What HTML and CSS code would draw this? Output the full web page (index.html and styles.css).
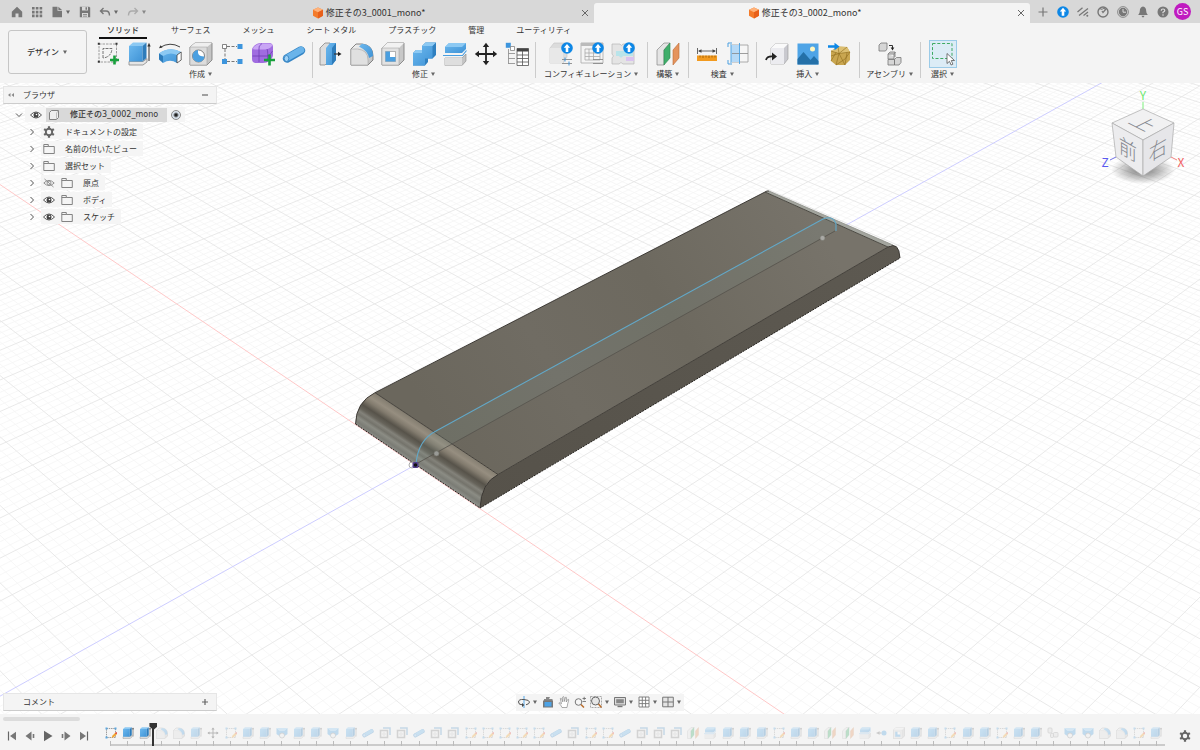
FILE: index.html
```html
<!DOCTYPE html>
<html lang="ja">
<head>
    <meta charset="UTF-8">
    <meta name="viewport" content="width=device-width, initial-scale=1.0">
    <title>修正その3_0002_mono</title>
    <link rel="stylesheet" href="styles.css">
</head>
<body>
    <!-- アイコン定義 -->
    <svg class="sprite" aria-hidden="true">
        <defs>
            <linearGradient id="blue" x1="0" y1="0" x2="1" y2="1"><stop offset="0" stop-color="#6cb8ee"/><stop offset="1" stop-color="#3f93d6"/></linearGradient>
            <linearGradient id="grey" x1="0" y1="0" x2="1" y2="1"><stop offset="0" stop-color="#f4f4f4"/><stop offset="1" stop-color="#bdbdbd"/></linearGradient>
        </defs>
        <symbol id="i-caret" viewBox="0 0 6 6"><path d="M1 1.5h4L3 5z" fill="#666"/></symbol>
        <symbol id="i-doc" viewBox="0 0 12 12"><path d="M6 .5l5 2.3v6L6 11.500 1 8.800v-6z" fill="#f47b2a"/><path d="M6 .5l5 2.300-5 2.400-5-2.400z" fill="#ffb27a"/><path d="M6 5.200l5-2.400v6L6 11.500z" fill="#e8601a"/></symbol>
        <symbol id="i-home" viewBox="0 0 12 12"><path d="M6 .8L.8 5.800V11.300h3.700V7.500h3v3.800h3.700V5.800z" fill="#777"/></symbol>
        <symbol id="i-apps" viewBox="0 0 12 12"><path d="M1 1h2.600v2.600H1zM4.800 1h2.600v2.600H4.800zM8.600 1h2.600v2.600H8.600zM1 4.800h2.600v2.600H1zM4.800 4.800h2.600v2.600H4.800zM8.600 4.800h2.600v2.600H8.600zM1 8.600h2.600v2.600H1zM4.800 8.600h2.600v2.600H4.800zM8.600 8.600h2.600v2.600H8.600z" fill="#777"/></symbol>
        <symbol id="i-file" viewBox="0 0 12 12"><path d="M1.500 .8h5v4h4.500v6.500H1.500z" fill="#777"/><path d="M7.400 .8L11 4H7.400z" fill="#777"/></symbol>
        <symbol id="i-save" viewBox="0 0 12 12"><path d="M.8.800h9.400l1 1v9.400H.8z" fill="#777"/><path d="M3 .8h6v3.700H3zM3 7h6v4.200H3z" fill="#d8d8d8"/><path d="M6.500 1.200h1.500v2.500H6.500zM4 8.200h4v.8H4zM4 9.700h4v.8H4z" fill="#777"/></symbol>
        <symbol id="i-undo" viewBox="0 0 12 12"><path d="M4.500 2L1.500 5l3 3M1.800 5H7q3.500 0 3.500 4.500" fill="none" stroke="#777" stroke-width="1.400"/></symbol>
        <symbol id="i-redo" viewBox="0 0 12 12"><path d="M7.500 2l3 3-3 3M10.200 5H5Q1.500 5 1.500 9.500" fill="none" stroke="#999" stroke-width="1.400"/></symbol>
        <symbol id="i-close" viewBox="0 0 12 12"><path d="M3 3l6 6M9 3L3 9" stroke="#666" fill="none"/></symbol>
        <symbol id="i-plus" viewBox="0 0 12 12"><path d="M6 1.500v9M1.500 6h9" stroke="#777" stroke-width="1.200"/></symbol>
        <symbol id="i-up" viewBox="0 0 12 12"><circle cx="6" cy="6" r="5.800" fill="#0d87e6"/><path d="M6 1.800L9.200 5.600H7.300V9.800H4.700V5.600H2.800z" fill="#fff"/></symbol>
        <symbol id="i-ext" viewBox="0 0 12 12"><path d="M.5 6L5.500 1.800M2 9.500L11 2.500M6.500 9.500l4.500-3.500" stroke="#777" stroke-width="1.300"/><circle cx="10.300" cy="9.800" r="1" fill="#777"/></symbol>
        <symbol id="i-globe" viewBox="0 0 12 12"><circle cx="6" cy="6" r="5" fill="none" stroke="#777" stroke-width="1.400"/><path d="M2.500 2.500l3 1M9 3L6 6.500l-1-1.500M8.500 3l-3-1" fill="none" stroke="#777" stroke-width="1.300"/></symbol>
        <symbol id="i-clock" viewBox="0 0 12 12"><circle cx="6" cy="6" r="5.400" fill="none" stroke="#777" stroke-width=".8"/><circle cx="6" cy="6" r="4.200" fill="#777"/><path d="M6 3v3.200h3" fill="none" stroke="#ddd"/></symbol>
        <symbol id="i-bell" viewBox="0 0 12 12"><path d="M6 .5q3.200.5 3.200 4.500 0 2.500 1.600 4H1.200Q2.800 7.500 2.800 5 2.800 1 6 .5zM4.500 9.800h3Q7 11.500 6 11.500T4.500 9.800z" fill="#777"/></symbol>
        <symbol id="i-help" viewBox="0 0 12 12"><circle cx="6" cy="6" r="5.500" fill="#777"/><path d="M4.200 4.800Q4.300 3 6 3t1.800 1.600Q7.800 5.600 6 6.300V7.300" fill="none" stroke="#ddd" stroke-width="1.200"/><circle cx="6" cy="9" r=".8" fill="#ddd"/></symbol>

        <symbol id="i-newsketch" viewBox="0 0 24 24"><path d="M3 2h17.500v18H3z" fill="none" stroke="#888" stroke-width=".8" stroke-dasharray="2.500 1"/><path d="M1.800 .8h2v2h-2zM19.500 .8h2v2h-2zM1.800 18.800h2v2h-2z" fill="#333"/><path d="M7 16V6.500h9Q15.500 15 7 16z" fill="none" stroke="#666" stroke-width=".9" stroke-dasharray="3 1"/><path d="M18.500 13.500v9M14 18h9" stroke="#18a03c" stroke-width="2.600"/></symbol>
        <symbol id="i-extrude" viewBox="0 0 24 24"><path d="M2 19.500h14l4-3v3.500l-4 3H2z" fill="#e5e5e5" stroke="#888" stroke-width=".8"/><path d="M2 4l4-3.500h13.500L15.500 4z" fill="#8cc9f3"/><path d="M2 4h13.500v15.500H2z" fill="url(#blue)"/><path d="M15.500 4l4-3.500V16l-4 3.500z" fill="#2d7cbb"/><path d="M22 19V3" stroke="#333"/><path d="M20.300 4.500L22 .8l1.700 3.700z" fill="#333"/></symbol>
        <symbol id="i-revolve" viewBox="0 0 24 24"><path d="M2 5.500Q12-.8 22 5" fill="none" stroke="#444"/><path d="M1 6.200l1.500-3 2 2.400z" fill="#333"/><path d="M1 11.500Q12 4 23 10v1.500l-4 9.500Q12 16.500 5 21z" fill="url(#blue)"/><path d="M1 11.500Q12 4 23 10l-4 3Q12 9.500 5 14z" fill="#8cc9f3"/><path d="M1 11.500L5 14v7l-4-3.500z" fill="#2d7cbb"/><path d="M19 13l4.200-3v8L19 21z" fill="#fff" stroke="#444" stroke-width=".8"/></symbol>
        <symbol id="i-hole" viewBox="0 0 24 24"><path d="M1 5l5-4h17v17l-5 5H1z" fill="#c5c5c5" stroke="#777" stroke-width=".8"/><path d="M1 5l5-4h17l-5 4z" fill="#efefef"/><path d="M1 5h17v18H1z" fill="#dcdcdc" stroke="#999" stroke-width=".5"/><circle cx="9.500" cy="14" r="6" fill="#fff" stroke="#666" stroke-width=".8"/><path d="M9 8Q8 15 15.500 14.500A6 6 0 1 1 9 8z" fill="#4a9fe0"/></symbol>
        <symbol id="i-pattern" viewBox="0 0 24 24"><path d="M7 4.500h10M5 7v10M7 19.500h10" stroke="#777" stroke-dasharray="3 1.500"/><path d="M2.500 2.500h4v4h-4z" fill="#fff" stroke="#666" stroke-width=".8"/><path d="M17.500 2h5v5h-5zM2 17h5v5H2zM17.500 17h5v5h-5z" fill="#3d95dd"/></symbol>
        <symbol id="i-form" viewBox="0 0 24 24"><path d="M1 8q0-3 4-5.500Q7 .5 11 1h7q4 0 4 4v8q0 3-4 6-2 2-6 2H5q-4 0-4-4z" fill="#a06ce0"/><path d="M2 6q3-4 8-4.500h8q3 0 3.500 2Q18 7.500 14 7.500H4Q2 7.500 2 6z" fill="#c9a6f5"/><path d="M8 7v13M1.500 14H16q3 0 5.500-5M16 7q1.500 3 0 13M11 1.500Q7 4 8 7" fill="none" stroke="#6f3cb5" stroke-width=".8"/><path d="M18.500 12.500v11M13 18h11" stroke="#18a03c" stroke-width="2.600"/></symbol>
        <symbol id="i-pipe" viewBox="0 0 24 24"><path d="M5 16.500L19 8.500" stroke="#3585c5" stroke-width="8.500" stroke-linecap="round"/><path d="M5 16L19 8" stroke="#6ab4ea" stroke-width="6.500" stroke-linecap="round"/><ellipse cx="4.500" cy="16.500" rx="2.300" ry="3" fill="#9fd2f7" stroke="#2d7cbb" stroke-width=".8"/></symbol>
        <symbol id="i-press" viewBox="0 0 24 24"><path d="M1 6l5-5h5v17l-5 5H1z" fill="#ddd" stroke="#888" stroke-width=".8"/><path d="M7 6l4-5h6v17l-4 5H7z" fill="url(#blue)"/><path d="M13 6l4-5v17l-4 5z" fill="#2d7cbb"/><path d="M15 12h5" stroke="#333" stroke-width="1.200"/><path d="M19 9.800l3.500 2.200-3.500 2.200z" fill="#222"/></symbol>
        <symbol id="i-fillet" viewBox="0 0 24 24"><path d="M1 7l5-5h6q11 1 11 12v4l-5 5H1z" fill="url(#grey)" stroke="#777" stroke-width=".9"/><path d="M1 23V7h6.500Q18 8 18 18v5z" fill="#e0e0e0" stroke="#999" stroke-width=".5"/><path d="M12 1.800Q23 3 23 14l-4 2Q18 9 9 4.500z" fill="url(#blue)"/></symbol>
        <symbol id="i-shell" viewBox="0 0 24 24"><path d="M1 6l5-5h17v17l-5 5H1z" fill="#c8c8c8" stroke="#777" stroke-width=".8"/><path d="M1 6l5-5h17l-5 5z" fill="#f2f2f2"/><path d="M1 6h17v17H1z" fill="#e2e2e2" stroke="#999" stroke-width=".5"/><path d="M4.500 9.500h10v10h-10z" fill="#fff" stroke="#888" stroke-width=".6"/><path d="M4.500 9.500H9V15h5.500v4.500h-10z" fill="#4a9fe0"/></symbol>
        <symbol id="i-combine" viewBox="0 0 24 24"><path d="M1 11l3-3h6V4l3.500-3.500H24V13l-3.500 3.500H16V20l-3 3.500H1z" fill="#2f80c0"/><path d="M1 11h9V4h10.500v12.500H13v7H1z" fill="url(#blue)"/><path d="M10 4L13.500.5H24L20.500 4zM1 11l3-3h6v3z" fill="#8cc9f3"/></symbol>
        <symbol id="i-split" viewBox="0 0 24 24"><path d="M2 5l4-4h17v6l-4 4H2z" fill="url(#blue)"/><path d="M2 5l4-4h17l-4 4z" fill="#8cc9f3"/><path d="M0 13.500h19.500l4-5" fill="none" stroke="#4a9fe0" stroke-width="1.200"/><path d="M2 16h17l4-4v7l-4 4.500H2z" fill="#c4c4c4" stroke="#888" stroke-width=".6"/><path d="M2 16h17v7.500H2z" fill="#dedede"/></symbol>
        <symbol id="i-move" viewBox="0 0 24 24"><path d="M12 3v18M3 12h18" stroke="#222" stroke-width="1.800"/><path d="M8.800 5L12 .8 15.200 5zM8.800 19l3.200 4.200 3.200-4.200zM5 8.800L.8 12 5 15.200zM19 8.800l4.200 3.200L19 15.200z" fill="#222"/></symbol>
        <symbol id="i-params" viewBox="0 0 24 24"><path d="M.8 .8h5v5h-5z" fill="#3d95dd"/><path d="M5.500 4.500h4v4h-4z" fill="#fff" stroke="#777" stroke-width=".7"/><path d="M3.500 7v15M3.500 11.500H10M3.500 16.500H10M3.500 21.500H10" fill="none" stroke="#888" stroke-width=".8"/><path d="M12 6.500h11.500v17H12z" fill="#fff" stroke="#555" stroke-width=".8"/><path d="M12 6.500h11.500V9.500H12z" fill="#444"/><path d="M12 13h11.500M12 16.500h11.500M12 20h11.500M17.500 9v14.500" stroke="#555" stroke-width=".8"/></symbol>
        <symbol id="i-cfg" viewBox="0 0 24 24"><path d="M1 6l4-5h13v14l-4 6H1z" fill="#dcdcdc" stroke="#c4c4c4" stroke-width=".6"/><path d="M1 6h13v15H1z" fill="#e8e8e8"/><path d="M13 17.500h10M13 21.500h10" stroke="#8a8a8a" stroke-width=".9"/><path d="M16 15.500v4M20 19.500v4" stroke="#3d95dd"/><circle cx="18" cy="6" r="5.800" fill="#0d87e6"/><path d="M18 2l3.200 3.800h-1.900V10h-2.600V5.800h-1.900z" fill="#fff"/></symbol>
        <symbol id="i-cfgtable" viewBox="0 0 24 24"><path d="M1 1h22v20H1z" fill="#f4f4f4" stroke="#aaa" stroke-width=".8"/><path d="M1 1h22v3H1z" fill="#bbb"/><path d="M5 7h15v11H5zM5 11h15M5 14.500h15M9 7v11M13.500 7v11" fill="none" stroke="#aaa" stroke-width=".8"/><path d="M13 17.500h10M13 21.500h10" stroke="#8a8a8a" stroke-width=".9"/><circle cx="18" cy="6" r="5.800" fill="#0d87e6"/><path d="M18 2l3.200 3.800h-1.900V10h-2.600V5.800h-1.900z" fill="#fff"/></symbol>
        <symbol id="i-cfgrule" viewBox="0 0 24 24"><path d="M1 2h8q1 3 3 0h11v20H12q-2-3-4 0H1v-6q3-2 0-4z" fill="#e4e4e4" stroke="#b4b4b4" stroke-width=".7"/><path d="M5 9h17v5H12q-2 3-4 0H5z" fill="#b9e4ea"/><path d="M15 15h8v4h-8z" fill="#d9c3ee"/><circle cx="18" cy="6" r="5.800" fill="#0d87e6"/><path d="M18 2l3.200 3.800h-1.900V10h-2.600V5.800h-1.900z" fill="#fff"/></symbol>
        <symbol id="i-plane" viewBox="0 0 24 24"><path d="M1 8l7-7h6L8 8v15H1z" fill="#e4e4e4" stroke="#888" stroke-width=".7"/><path d="M8 8l6-7v15l-6 7z" fill="#3fae6a" stroke="#2c8a50" stroke-width=".6"/><path d="M17 8l6-7v15l-6 7z" fill="#e5935c" stroke="#b96c38" stroke-width=".6"/></symbol>
        <symbol id="i-measure" viewBox="0 0 24 24"><path d="M2.500 6v6M21.500 6v6M4 9h16" stroke="#666"/><path d="M3 9l3.500-1.800v3.600zM21 9l-3.500-1.800v3.600z" fill="#444"/><path d="M2 13.500h20V19H2z" fill="#f29a1f"/><path d="M5 13.500v2M8 13.500v2.500M11 13.500v2M14 13.500v2.500M17 13.500v2M20 13.500v2" stroke="#8a5200" stroke-width=".7"/></symbol>
        <symbol id="i-section" viewBox="0 0 24 24"><path d="M6 3h16v17H6z" fill="#f6f6f6" stroke="#999" stroke-width=".8"/><path d="M5 3h8.500v17H5z" fill="#b6d9f6"/><path d="M6 11.500h16" stroke="#888" stroke-width=".8"/><path d="M13.500 1v21M5 2v19" stroke="#4a9fe0" stroke-width=".9"/><path d="M6 1H2v4M2 18v4h4" fill="none" stroke="#4a9fe0"/></symbol>
        <symbol id="i-derive" viewBox="0 0 24 24"><path d="M6 6l4-4h13v15l-4 5H6z" fill="#c9c9cf" stroke="#999" stroke-width=".6"/><path d="M6 6h13v16H6z" fill="#ececf0"/><path d="M6 6l4-4h13l-4 4z" fill="#fafafa"/><path d="M1 18q1-4 7-3.500" fill="none" stroke="#222" stroke-width="1.800"/><path d="M7 10.500l5 4-5 4z" fill="#222"/></symbol>
        <symbol id="i-image" viewBox="0 0 24 24"><path d="M1.500 1.500h21v21h-21z" fill="#4fa4e6"/><path d="M1.500 17l6-7 7 8 3.500-4 4.500 5v3.500h-21z" fill="#2470a8"/><circle cx="16.500" cy="7" r="2.500" fill="#fff7c2"/></symbol>
        <symbol id="i-mesh" viewBox="0 0 24 24"><path d="M4 9l7-4.500L20 5l3 5v8l-5 5H9l-5-4z" fill="#c9a650"/><path d="M4 9l8 2.500L23 10l-3-5-9-.5z" fill="#dcbf72"/><path d="M4 9l8 2.500L23 10M12 11.500L9 23M12 11.500L18 23l2-12.500M11 4.500l1 7 8-6.500M4 14l8-2.500M4 19l5-8.500M9 23l9-6 5-7" fill="none" stroke="#8f6b1c" stroke-width=".6"/><path d="M1 4.500h7" stroke="#0d87e6" stroke-width="2.500"/><path d="M7.500 .8l5 3.700-5 3.700z" fill="#0d87e6"/></symbol>
        <symbol id="i-assembly" viewBox="0 0 24 24"><g fill="#d6d6d6" stroke="#777" stroke-width=".8"><path d="M1 3l2-2h6v6L7.500 9H1zM10 12l2-2h5v5M10 12v5h6v-5zM16 12l1.500-2M10 17.500h6.500v5.500H10zM16.500 17.500l2-2H23v5l-2 2.500h-4.500z"/></g><path d="M11 3.500h3.500V6" fill="none" stroke="#333"/><path d="M12.700 5.500h3.600L14.500 8.500z" fill="#222"/></symbol>
        <symbol id="i-select" viewBox="0 0 24 24"><path d="M1.500 1.500H21v15H1.500z" fill="none" stroke="#3eaa63" stroke-width="1" stroke-dasharray="3 1.800"/><path d="M16 11.500v10l2.500-2.200 1.600 3.700 1.800-.8-1.600-3.700h3.200z" fill="#fff" stroke="#555" stroke-width=".8"/></symbol>

        <symbol id="i-sketch" viewBox="0 0 24 24"><path d="M3 3h18v18H3z" fill="none" stroke="#777" stroke-width="1.400" stroke-dasharray="3 1.500"/><path d="M1 1h4v4H1zM19 1h4v4h-4zM1 19h4v4H1z" fill="#5aa7e2"/><path d="M13 22l2-5 6-6 3 3-6 6z" fill="#f2a531"/><path d="M20 12l2.500-2 2 2-2 2.500z" fill="#d33"/></symbol>
        <symbol id="i-loft" viewBox="0 0 24 24"><path d="M1 2l6 4h10l6-4v12l-7 5H8l-7-5z" fill="#4a9fe0"/><path d="M1 2h22l-6 6H7z" fill="#8cc9f3"/><circle cx="12" cy="17" r="5" fill="#eee" stroke="#777" stroke-width="1.400"/></symbol>
        <symbol id="i-offset" viewBox="0 0 24 24"><path d="M8 2h14v14" fill="none" stroke="#5f9cc9" stroke-width="3"/><path d="M3 7h14v14H3z" fill="#eee" stroke="#888" stroke-width="3"/><path d="M8 12h4v4H8z" fill="#fff" stroke="#999"/></symbol>
        <symbol id="i-snap" viewBox="0 0 24 24"><path d="M1 12h10" stroke="#666" stroke-width="2"/><path d="M7 8L2 12l5 4z" fill="#666"/><circle cx="16" cy="12" r="5" fill="#4a9fe0"/></symbol>
        <symbol id="i-link" viewBox="0 0 24 24"><g fill="#ddd" stroke="#888" stroke-width="1.500"><rect x="2" y="2" width="8" height="10" rx="2"/><rect x="13" y="11" width="9" height="9" rx="2"/><rect x="7" y="13" width="6" height="8" rx="2"/></g></symbol>

        <symbol id="i-eye" viewBox="0 0 12 12"><path d="M.5 6Q6 0 11.500 6 6 12 .5 6z" fill="#fff" stroke="#555"/><circle cx="6" cy="6" r="2.500" fill="#444"/><circle cx="6.500" cy="5.500" r=".8" fill="#fff"/></symbol>
        <symbol id="i-eyeoff" viewBox="0 0 12 12"><path d="M.8 6Q6 .8 11.200 6 6 11.200.8 6zM1.500 2l9 8" fill="none" stroke="#888" stroke-width=".9"/><circle cx="6" cy="6" r="2" fill="none" stroke="#888" stroke-width=".9"/></symbol>
        <symbol id="i-folder" viewBox="0 0 12 12"><path d="M.8 10.500v-9h4.500v2h6v7zM.8 3.500h4.500" fill="none" stroke="#777" stroke-width=".9"/></symbol>
        <symbol id="i-part" viewBox="0 0 12 12"><path d="M1.500 3.500l2-2h7v7l-2 2h-7z" fill="#eee" stroke="#777" stroke-width=".9"/><path d="M8.500 10.500v-6.500l2-2.500" fill="none" stroke="#aaa" stroke-width=".7"/></symbol>
        <symbol id="i-gear" viewBox="0 0 12 12"><circle cx="6" cy="6" r="3.200" fill="none" stroke="#666" stroke-width="1.900"/><path d="M6 .3v2.200M6 9.500v2.200M1.100 3.100l1.900 1.200M9 7.700l1.900 1.200M1.100 8.900L3 7.700M9 4.300l1.900-1.200" stroke="#666" stroke-width="2.200"/></symbol>
        <symbol id="i-right" viewBox="0 0 12 12"><path d="M4.500 3l3 3-3 3" fill="none" stroke="#555"/></symbol>
        <symbol id="i-down" viewBox="0 0 12 12"><path d="M3 4.500l3 3 3-3" fill="none" stroke="#555"/></symbol>
        <symbol id="i-collapse" viewBox="0 0 12 12"><path d="M5.500 4v4L3 6zM9 4v4L6.500 6z" fill="#888"/></symbol>
        <symbol id="i-minus" viewBox="0 0 12 12"><path d="M3 6h6" stroke="#666" stroke-width="1.200"/></symbol>
        <symbol id="i-add" viewBox="0 0 12 12"><path d="M3 6h6M6 3v6" stroke="#666" stroke-width="1.200"/></symbol>

        <symbol id="i-orbit" viewBox="0 0 12 12"><path d="M6 0v12" stroke="#6db3ea" stroke-width="1.200"/><path d="M8 8.800Q11.500 8 11.500 6T6 3.500.5 6t4 2.800" fill="none" stroke="#555"/><path d="M4 7l2.300 2L4 11z" fill="#444"/></symbol>
        <symbol id="i-look" viewBox="0 0 12 12"><path d="M2 3h8.500v2H2zM4 1h4l-1 2H4z" fill="#888"/><path d="M1 4.500h10v7H1z" fill="#777"/><path d="M2.500 6h7v4.500h-7z" fill="#4da3e6"/></symbol>
        <symbol id="i-hand" viewBox="0 0 12 12"><path d="M4 11.500Q3 9 .8 7q.7-1 2.700.8L2.300 2.500q.8-.8 1.400.3l1 3V1q.9-.9 1.300 0l.3 4.500L7.500 1.300q1-.4 1 .6L8.200 6l1.700-2.700q1-.2.8.8Q9.500 8 9 11.500z" fill="#fff" stroke="#888" stroke-width=".7"/></symbol>
        <symbol id="i-zoom" viewBox="0 0 12 12"><circle cx="4.500" cy="6" r="3.300" fill="#f6f6f6" stroke="#777"/><path d="M7 8.500l3 3" stroke="#b86b2a" stroke-width="1.500"/><path d="M8.500 2.500h3.500M10.200.8v3.400M8.500 5.500h3.500" stroke="#666" stroke-width=".8"/></symbol>
        <symbol id="i-fit" viewBox="0 0 12 12"><path d="M.5.500h11v11H.5z" fill="none" stroke="#888" stroke-width=".7" stroke-dasharray="2 1"/><circle cx="5.500" cy="5" r="4" fill="#e6e6e6" stroke="#666"/><path d="M8.500 8l3 3.500" stroke="#b86b2a" stroke-width="1.500"/></symbol>
        <symbol id="i-display" viewBox="0 0 12 12"><path d="M.5 1.500h11v7.500H.5z" fill="#ddd" stroke="#777"/><path d="M2.200 3.200h7.600v4H2.200z" fill="#888"/><path d="M3.500 10.500h5" stroke="#777" stroke-width="1.400"/></symbol>
        <symbol id="i-grid" viewBox="0 0 12 12"><path d="M1 1h10v10H1zM1 4.300h10M1 7.600h10M4.300 1v10M7.600 1v10" fill="#fff" stroke="#777" stroke-width=".9"/></symbol>
        <symbol id="i-views" viewBox="0 0 12 12"><path d="M.7 1.200h10.600v9.600H.7z" fill="#e4e4e4" stroke="#777"/><path d="M6 1v10M.7 6h10.600" stroke="#777"/></symbol>

        <symbol id="i-first" viewBox="0 0 12 12"><path d="M2.500 1.500v9" stroke="#666" stroke-width="1.200"/><path d="M10 1.800v8.400L4 6z" fill="#777"/></symbol>
        <symbol id="i-prev" viewBox="0 0 12 12"><path d="M7.500 1.500v9L1.500 6z" fill="#777"/><path d="M9.500 4v4" stroke="#777" stroke-width="1.600"/></symbol>
        <symbol id="i-play" viewBox="0 0 12 12"><path d="M2 .8v10.400L10.500 6z" fill="#666"/></symbol>
        <symbol id="i-next" viewBox="0 0 12 12"><path d="M4.500 1.500v9l6-4.500z" fill="#777"/><path d="M2.500 4v4" stroke="#777" stroke-width="1.600"/></symbol>
        <symbol id="i-last" viewBox="0 0 12 12"><path d="M9.500 1.500v9" stroke="#666" stroke-width="1.200"/><path d="M2 1.800v8.400L8 6z" fill="#777"/></symbol>
    </svg>

    <!-- タイトルバー -->
    <header class="titlebar">
        <div class="quick">
            <button aria-label="ホーム"><svg><use href="#i-home"/></svg></button>
            <button aria-label="データパネル"><svg><use href="#i-apps"/></svg></button>
            <button class="with-caret" aria-label="ファイル"><svg><use href="#i-file"/></svg><svg class="caret"><use href="#i-caret"/></svg></button>
            <button aria-label="保存"><svg><use href="#i-save"/></svg></button>
            <button class="with-caret" aria-label="元に戻す"><svg><use href="#i-undo"/></svg><svg class="caret"><use href="#i-caret"/></svg></button>
            <button class="with-caret disabled" aria-label="やり直し"><svg><use href="#i-redo"/></svg><svg class="caret"><use href="#i-caret"/></svg></button>
        </div>
        <div class="doc-tab">
            <button class="doc-name"><svg><use href="#i-doc"/></svg>修正その3_0001_mono*</button>
            <button class="doc-close" aria-label="閉じる"><svg><use href="#i-close"/></svg></button>
        </div>
        <div class="doc-tab active">
            <button class="doc-name"><svg><use href="#i-doc"/></svg>修正その3_0002_mono*</button>
            <button class="doc-close" aria-label="閉じる"><svg><use href="#i-close"/></svg></button>
        </div>
        <div class="account">
            <button aria-label="新規"><svg><use href="#i-plus"/></svg></button>
            <button aria-label="更新"><svg><use href="#i-up"/></svg></button>
            <button aria-label="拡張機能"><svg><use href="#i-ext"/></svg></button>
            <button aria-label="オンライン"><svg><use href="#i-globe"/></svg></button>
            <button aria-label="ジョブ"><svg><use href="#i-clock"/></svg></button>
            <button aria-label="通知"><svg><use href="#i-bell"/></svg></button>
            <button aria-label="ヘルプ"><svg><use href="#i-help"/></svg></button>
            <button class="avatar">GS</button>
        </div>
    </header>

    <!-- ツールバー -->
    <div class="toolbar">
        <button class="workspace">デザイン<svg class="caret"><use href="#i-caret"/></svg></button>
        <div class="ribbon">
            <nav class="ribbon-tabs">
                <button class="current">ソリッド</button>
                <button>サーフェス</button>
                <button>メッシュ</button>
                <button>シート メタル</button>
                <button>プラスチック</button>
                <button>管理</button>
                <button>ユーティリティ</button>
            </nav>
            <div class="groups">
                <div class="group">
                    <div class="tools">
                        <button aria-label="スケッチを作成"><svg><use href="#i-newsketch"/></svg></button>
                        <button aria-label="押し出し"><svg><use href="#i-extrude"/></svg></button>
                        <button aria-label="回転"><svg><use href="#i-revolve"/></svg></button>
                        <button aria-label="穴"><svg><use href="#i-hole"/></svg></button>
                        <button aria-label="パターン"><svg><use href="#i-pattern"/></svg></button>
                        <button aria-label="フォームを作成"><svg><use href="#i-form"/></svg></button>
                        <button aria-label="パイプ"><svg><use href="#i-pipe"/></svg></button>
                    </div>
                    <button class="group-name">作成<svg class="caret"><use href="#i-caret"/></svg></button>
                </div>
                <div class="group">
                    <div class="tools">
                        <button aria-label="プレス/プル"><svg><use href="#i-press"/></svg></button>
                        <button aria-label="フィレット"><svg><use href="#i-fillet"/></svg></button>
                        <button aria-label="シェル"><svg><use href="#i-shell"/></svg></button>
                        <button aria-label="結合"><svg><use href="#i-combine"/></svg></button>
                        <button aria-label="分割"><svg><use href="#i-split"/></svg></button>
                        <button aria-label="移動"><svg><use href="#i-move"/></svg></button>
                        <button aria-label="パラメータ"><svg><use href="#i-params"/></svg></button>
                    </div>
                    <button class="group-name">修正<svg class="caret"><use href="#i-caret"/></svg></button>
                </div>
                <div class="group wide">
                    <div class="tools">
                        <button aria-label="コンフィギュレーションを作成"><svg><use href="#i-cfg"/></svg></button>
                        <button aria-label="テーブル"><svg><use href="#i-cfgtable"/></svg></button>
                        <button aria-label="ルール"><svg><use href="#i-cfgrule"/></svg></button>
                    </div>
                    <button class="group-name">コンフィギュレーション<svg class="caret"><use href="#i-caret"/></svg></button>
                </div>
                <div class="group mid">
                    <div class="tools">
                        <button aria-label="オフセット平面"><svg><use href="#i-plane"/></svg></button>
                    </div>
                    <button class="group-name">構築<svg class="caret"><use href="#i-caret"/></svg></button>
                </div>
                <div class="group">
                    <div class="tools">
                        <button aria-label="計測"><svg><use href="#i-measure"/></svg></button>
                        <button aria-label="断面解析"><svg><use href="#i-section"/></svg></button>
                    </div>
                    <button class="group-name">検査<svg class="caret"><use href="#i-caret"/></svg></button>
                </div>
                <div class="group mid">
                    <div class="tools">
                        <button aria-label="派生を挿入"><svg><use href="#i-derive"/></svg></button>
                        <button aria-label="キャンバス"><svg><use href="#i-image"/></svg></button>
                        <button aria-label="メッシュを挿入"><svg><use href="#i-mesh"/></svg></button>
                    </div>
                    <button class="group-name">挿入<svg class="caret"><use href="#i-caret"/></svg></button>
                </div>
                <div class="group mid">
                    <div class="tools">
                        <button aria-label="新規コンポーネント"><svg><use href="#i-assembly"/></svg></button>
                    </div>
                    <button class="group-name">アセンブリ<svg class="caret"><use href="#i-caret"/></svg></button>
                </div>
                <div class="group wide">
                    <div class="tools">
                        <button class="selected" aria-label="選択"><svg><use href="#i-select"/></svg></button>
                    </div>
                    <button class="group-name">選択<svg class="caret"><use href="#i-caret"/></svg></button>
                </div>
            </div>
        </div>
    </div>

    <!-- 3Dビュー -->
    <main class="viewport">
        <svg class="scene" viewBox="0 83 1200 631" preserveAspectRatio="xMidYMid slice">
            <defs>
                <linearGradient id="top-face" gradientUnits="userSpaceOnUse" x1="440" y1="430" x2="800" y2="200"><stop offset="0" stop-color="#6b675d"/><stop offset=".3" stop-color="#706c63"/><stop offset=".6" stop-color="#6d695f"/><stop offset="1" stop-color="#77736a"/></linearGradient>
                <linearGradient id="round-face" gradientUnits="userSpaceOnUse" x1="437" y1="433" x2="416" y2="465"><stop offset="0" stop-color="#817b6e"/><stop offset=".18" stop-color="#968e80"/><stop offset=".3" stop-color="#827b6e"/><stop offset=".45" stop-color="#57534a"/><stop offset=".56" stop-color="#67645b"/><stop offset=".64" stop-color="#83827a"/><stop offset=".72" stop-color="#74736b"/><stop offset=".8" stop-color="#8b8c84"/><stop offset=".9" stop-color="#7b7c75"/><stop offset="1" stop-color="#8c8e88"/></linearGradient>
                <linearGradient id="side-face" x1="0" y1="1" x2="1" y2="0"><stop offset="0" stop-color="#56524a"/><stop offset="1" stop-color="#5d5951"/></linearGradient>
            </defs>
            <rect y="83" width="1200" height="631" fill="#fff"/>
            <g id="floor"></g>
            <g class="body">
                <path d="M375 392.700L765 192 888 247 498 474.500z" fill="url(#top-face)"/>
                <path d="M765 192q2-1.500 4-1L893 245q-3 0-5 2z" fill="#a3a59e"/>
                <path d="M765 192L888 247" stroke="#4b4942"/>
                <path d="M375 392.700Q356 402 355.500 424L480 508q1-25 18-33.500z" fill="url(#round-face)"/>
                <path d="M498 474.500L888 247Q899 241 900 258L480 508q1-25 18-33.500z" fill="url(#side-face)"/>
                <path d="M375 392.700L498 474.500 888 247" fill="none" stroke="#3b3832" stroke-width=".9"/>
                <path d="M355.500 424Q356 402 375 392.700L765 192q2-1.500 4-1" fill="none" stroke="#33302b" stroke-width=".9"/>
                <path d="M769 191L893 245" stroke="#8b8d86" stroke-width=".8"/>
                <path d="M888 247Q899 241 900 258M480 508q1-25 18-33.500" fill="none" stroke="#33302b" stroke-width=".9"/>
                <path d="M355.500 424L480 508 900 258" fill="none" stroke="#25221e" stroke-dasharray="2 1"/>
            </g>
            <path d="M416 464q2-24 20-33L823 219q10-4 13 5v6z" fill="#8aa39a" fill-opacity=".14"/>
            <path d="M416 464L835 231" stroke="#55534c" stroke-width=".8"/>
            <path d="M416 464q2-24 20-33L823 219q10-4 13 5v7" fill="none" stroke="#62a8c8" stroke-width="1.100"/>
            <circle cx="436.500" cy="453.500" r="2.500" fill="#999a96" stroke="#77776f" stroke-width=".6"/>
            <circle cx="822.500" cy="238" r="2.500" fill="#a9a9a5" stroke="#77776f" stroke-width=".6"/>
            <circle cx="412" cy="465" r="3" fill="none" stroke="#aaa"/>
            <rect x="412.500" y="462" width="6" height="6" rx="1.500" fill="#54408c"/>
            <circle cx="415.500" cy="465" r="1.800" fill="#111"/>
        </svg>

        <svg class="viewcube" viewBox="0 -4 95 109">
            <defs><radialGradient id="shade"><stop offset="0" stop-color="#555" stop-opacity=".8"/><stop offset="1" stop-color="#555" stop-opacity="0"/></radialGradient></defs>
            <ellipse cx="48" cy="82" rx="32" ry="14" fill="url(#shade)"/>
            <path d="M48 14v7" stroke="#7cf07c"/>
            <path d="M15 72l6-3" stroke="#7373e8"/>
            <path d="M76 69l6 3" stroke="#f08080"/>
            <path d="M48 21l31 14-31 17-31-17z" fill="#f1f1f2" stroke="#aaa" stroke-width=".7"/>
            <path d="M17 35l31 17v36L21 69z" fill="#ececee" stroke="#aaa" stroke-width=".7"/>
            <path d="M79 35L48 52v36l28-19z" fill="#e6e6e9" stroke="#aaa" stroke-width=".7"/>
            <text class="face" transform="matrix(.9 .45 -.9 .45 48 36)" y="7">上</text>
            <text class="face" transform="matrix(.87 .5 0 1 33 62)" y="7">前</text>
            <text class="face" transform="matrix(.87 -.5 0 1 63 62)" y="7">右</text>
            <text class="axis axis-y" x="48" y="12">Y</text>
            <text class="axis axis-z" x="10" y="79">Z</text>
            <text class="axis axis-x" x="86" y="79">X</text>
        </svg>

        <aside class="browser">
            <div class="panel-head">
                <button aria-label="折りたたむ"><svg><use href="#i-collapse"/></svg></button>
                <span>ブラウザ</span>
                <button class="push" aria-label="最小化"><svg><use href="#i-minus"/></svg></button>
            </div>
            <ul class="tree">
                <li class="root">
                    <button aria-label="展開"><svg><use href="#i-down"/></svg></button>
                    <div class="node">
                        <button aria-label="表示"><svg><use href="#i-eye"/></svg></button>
                        <label class="active-part" for="activate"><svg><use href="#i-part"/></svg>修正その3_0002_mono</label>
                        <input type="radio" id="activate" checked>
                    </div>
                </li>
                <li>
                    <button aria-label="展開"><svg><use href="#i-right"/></svg></button>
                    <div class="node"><svg><use href="#i-gear"/></svg><span>ドキュメントの設定</span></div>
                </li>
                <li>
                    <button aria-label="展開"><svg><use href="#i-right"/></svg></button>
                    <div class="node"><svg><use href="#i-folder"/></svg><span>名前の付いたビュー</span></div>
                </li>
                <li>
                    <button aria-label="展開"><svg><use href="#i-right"/></svg></button>
                    <div class="node"><svg><use href="#i-folder"/></svg><span>選択セット</span></div>
                </li>
                <li>
                    <button aria-label="展開"><svg><use href="#i-right"/></svg></button>
                    <div class="node"><button aria-label="表示"><svg><use href="#i-eyeoff"/></svg></button><svg><use href="#i-folder"/></svg><span>原点</span></div>
                </li>
                <li>
                    <button aria-label="展開"><svg><use href="#i-right"/></svg></button>
                    <div class="node"><button aria-label="表示"><svg><use href="#i-eye"/></svg></button><svg><use href="#i-folder"/></svg><span>ボディ</span></div>
                </li>
                <li>
                    <button aria-label="展開"><svg><use href="#i-right"/></svg></button>
                    <div class="node"><button aria-label="表示"><svg><use href="#i-eye"/></svg></button><svg><use href="#i-folder"/></svg><span>スケッチ</span></div>
                </li>
            </ul>
        </aside>

        <div class="view-footer">
            <div class="panel-head comments">
                <span>コメント</span>
                <button class="push" aria-label="コメントを追加"><svg><use href="#i-add"/></svg></button>
            </div>
            <div class="navbar">
                <button class="with-caret" aria-label="オービット"><svg><use href="#i-orbit"/></svg><svg class="caret"><use href="#i-caret"/></svg></button>
                <button aria-label="ビュー正面"><svg><use href="#i-look"/></svg></button>
                <button aria-label="画面移動"><svg><use href="#i-hand"/></svg></button>
                <button aria-label="ズーム"><svg><use href="#i-zoom"/></svg></button>
                <button class="with-caret" aria-label="フィット"><svg><use href="#i-fit"/></svg><svg class="caret"><use href="#i-caret"/></svg></button>
                <button class="with-caret" aria-label="表示設定"><svg><use href="#i-display"/></svg><svg class="caret"><use href="#i-caret"/></svg></button>
                <button class="with-caret" aria-label="グリッド"><svg><use href="#i-grid"/></svg><svg class="caret"><use href="#i-caret"/></svg></button>
                <button class="with-caret" aria-label="ビューポート"><svg><use href="#i-views"/></svg><svg class="caret"><use href="#i-caret"/></svg></button>
            </div>
        </div>
    </main>

    <!-- タイムライン -->
    <footer class="history">
        <div class="scroll-thumb"></div>
        <div class="history-row">
            <div class="playback">
                <button aria-label="最初へ"><svg><use href="#i-first"/></svg></button>
                <button aria-label="前へ"><svg><use href="#i-prev"/></svg></button>
                <button aria-label="再生"><svg><use href="#i-play"/></svg></button>
                <button aria-label="次へ"><svg><use href="#i-next"/></svg></button>
                <button aria-label="最後へ"><svg><use href="#i-last"/></svg></button>
            </div>
            <ol class="timeline" id="timeline"></ol>
            <button class="settings" aria-label="設定"><svg><use href="#i-gear"/></svg></button>
        </div>
    </footer>

    <script src="script.js"></script>
</body>
</html>
```
FILE: styles.css
```css
* {
    box-sizing: border-box;
}

body {
    font-family: "Noto Sans CJK JP", sans-serif;
    font-size: 8px;
    line-height: 12px;
    color: #333;
    margin: 0;
    min-height: 100vh;
    display: flex;
    flex-direction: column;
    background-color: #f4f4f4;
}

button {
    font: inherit;
    color: inherit;
    background: none;
    border: none;
    margin: 0;
    padding: 0;
    display: flex;
    align-items: center;
    justify-content: center;
    white-space: nowrap;
    cursor: pointer;
}

svg {
    display: block;
    width: 12px;
    height: 12px;
    flex: none;
}

.sprite {
    position: absolute;
    width: 0;
    height: 0;
}

.caret {
    width: 6px;
    height: 6px;
}

.with-caret {
    gap: 2px;
}

.disabled {
    opacity: 0.7;
}

/* タイトルバー */
.titlebar {
    display: flex;
    height: 23px;
    background-color: #d8d8d8;
}

.quick {
    display: flex;
    align-items: center;
    gap: 8px;
    padding: 0 11px;
}

.doc-tab {
    flex: 1;
    display: flex;
    align-items: center;
    margin-top: 3px;
    padding-right: 3px;
    font-size: 9px;
}

.doc-tab.active {
    background-color: #f4f4f4;
    border-radius: 3px 3px 0 0;
}

.doc-name {
    flex: 1;
    gap: 2px;
}

.account {
    display: flex;
    align-items: center;
    gap: 8px;
    padding: 0 9px 0 7px;
}

.avatar {
    width: 17px;
    height: 17px;
    margin-left: -3px;
    border-radius: 50%;
    background-color: #c01bc0;
    color: #fff;
    font-size: 9px;
}

/* ツールバー */
.toolbar {
    display: flex;
    height: 60px;
    background-color: #f4f4f4;
}

.workspace {
    width: 79px;
    height: 44px;
    margin: 7px 3px 0 8px;
    gap: 3px;
    border: 1px solid #c6c6c6;
    border-radius: 3px;
    font-weight: 500;
}

.ribbon-tabs {
    display: flex;
    gap: 16px;
    padding-left: 9px;
}

.ribbon-tabs button {
    height: 16px;
    padding: 0 8px;
    border-bottom: 2px solid transparent;
}

.ribbon-tabs .current {
    border-bottom-color: #111;
    font-weight: 500;
}

.groups {
    display: flex;
    padding-top: 1px;
}

.group {
    display: flex;
    flex-direction: column;
    align-items: center;
    height: 40px;
    padding: 0 4px;
    background: linear-gradient(#ccc, #ccc) right 2px / 1px 36px no-repeat;
    border-right: 1px solid transparent;
    background-origin: border-box;
}

.group.mid {
    padding: 0 6px;
}

.group.wide {
    padding: 0 8px;
}

.group:last-child {
    background: none;
}

.tools {
    display: flex;
    gap: 3px;
}

.tools button {
    width: 28px;
    height: 28px;
    border: 1px solid transparent;
}

.tools svg {
    width: 24px;
    height: 24px;
}

.tools .selected {
    background-color: #dcecf6;
    border-color: #9bcbe8;
}

.group-name {
    gap: 2px;
}

/* 3Dビュー */
.viewport {
    position: relative;
    flex: 1;
    display: flex;
    flex-direction: column;
    justify-content: space-between;
    overflow: hidden;
}

.scene {
    position: absolute;
    inset: 0;
    width: 100%;
    height: 100%;
}

.minor {
    stroke: #f5f5f5;
    stroke-width: 0.8;
}

.major {
    stroke: #e6e6e6;
    stroke-width: 0.9;
}

.axis-red {
    stroke: #ffc8c8;
}

.axis-blue {
    stroke: #cdcdff;
}

.viewcube {
    position: absolute;
    top: 1px;
    right: 10px;
    width: 95px;
    height: 109px;
    overflow: visible;
}

.face {
    font-size: 21px;
    font-weight: 300;
    text-anchor: middle;
    fill: #85888f;
}

.axis {
    font-size: 12px;
    text-anchor: middle;
}

.axis-y {
    fill: #6fe86f;
}

.axis-z {
    fill: #5a5af0;
}

.axis-x {
    fill: #f06060;
}

.browser {
    position: relative;
    width: 214px;
    margin: 3px;
}

.panel-head {
    display: flex;
    align-items: center;
    width: 214px;
    height: 18px;
    padding: 0 5px 0 1px;
    gap: 6px;
    background-color: #f4f4f4;
    border: 1px solid #e6e6e6;
    border-bottom-color: #ccc;
}

.push {
    margin-left: auto;
}

.tree {
    list-style: none;
    margin: 2px 0 0;
    padding: 0;
}

.tree li {
    display: flex;
    align-items: center;
    height: 17px;
    padding-left: 23px;
    gap: 3px;
}

.tree .root {
    padding-left: 10px;
    gap: 0;
}

.node {
    display: flex;
    align-items: center;
    height: 15px;
    padding: 0 6px 0 2px;
    gap: 6px;
    background-color: #f5f5f5;
}

.node span {
    padding-left: 4px;
}

.root .node {
    padding: 0 4px 0 5px;
    gap: 4px;
}

.active-part {
    display: flex;
    align-items: center;
    height: 14px;
    padding: 0 9px 0 2px;
    gap: 10px;
    background-color: #d9d9d9;
    font-family: "DejaVu Sans", "Noto Sans CJK JP", sans-serif;
    font-weight: 500;
}

.node input {
    appearance: none;
    width: 10px;
    height: 10px;
    margin: 0;
    border: 1px solid #8a8a8a;
    border-radius: 50%;
    background: radial-gradient(circle, #222 1px, #dbe4ee 3px);
}

.view-footer {
    position: relative;
    display: grid;
    grid-template-columns: 1fr auto 1fr;
    align-items: center;
    padding: 3px;
}

.comments {
    padding-left: 19px;
}

.navbar {
    display: flex;
    height: 17px;
    padding: 0 2px;
    gap: 4px;
    background-color: #f4f4f4;
}

/* タイムライン */
.history {
    height: 36px;
    padding-top: 3px;
    background-color: #f4f4f4;
}

.scroll-thumb {
    width: 77px;
    height: 4px;
    margin-left: 3px;
    border-radius: 2px;
    background-color: #dcdcdc;
}

.history-row {
    display: flex;
    height: 29px;
}

.playback {
    display: flex;
    gap: 6px;
    padding: 0 12px 0 6px;
}

.timeline {
    flex: 1;
    display: flex;
    list-style: none;
    margin: 0;
    padding: 0;
    background: linear-gradient(#cbcbcb, #cbcbcb) 8px 23px / 100% 2px no-repeat;
}

.timeline li {
    position: relative;
    flex: 1;
    display: flex;
    justify-content: center;
    height: 25px;
    padding-top: 6px;
    background: linear-gradient(#bbb, #bbb) center bottom / 1px 5px no-repeat;
}

.timeline button {
    width: 12px;
    height: 12px;
}

.timeline .suppressed button {
    opacity: 0.3;
}

.timeline .marker::before {
    content: "";
    position: absolute;
    top: 2px;
    right: -4px;
    width: 8px;
    height: 7px;
    background-color: #333;
    clip-path: polygon(0 0, 100% 0, 100% 50%, 50% 100%, 0 50%);
}

.timeline .marker::after {
    content: "";
    position: absolute;
    top: 2px;
    right: -1px;
    width: 2px;
    height: 23px;
    background-color: #333;
}

.settings {
    padding: 0 9px 0 14px;
}
```
FILE: script.js
```js
// 透視投影: 行 k (水平方向の対角線) と列 n から画面座標を求める
const HORIZON = -706;
const CENTER = 600;
const ORIGIN = { k: 2, n: -2.414 };

function project(k, n) {
    const w = 0.013587 - 0.0002606 * k;
    return [CENTER + n / w, HORIZON + 1 / (0.06536 * w)];
}

function addLine(parent, dir, offset, className) {
    const line = document.createElementNS('http://www.w3.org/2000/svg', 'line');
    const c = ORIGIN.n - dir * ORIGIN.k / 2 + offset;
    const [x1, y1] = project(-26, c + dir * -13);
    const [x2, y2] = project(14, c + dir * 7);
    line.setAttribute('x1', x1.toFixed(2));
    line.setAttribute('y1', y1.toFixed(2));
    line.setAttribute('x2', x2.toFixed(2));
    line.setAttribute('y2', y2.toFixed(2));
    line.setAttribute('class', className);
    parent.appendChild(line);
}

function drawFloor() {
    const floor = document.getElementById('floor');
    const range = 30;
    for (const type of ['minor', 'major']) {
        for (let i = -range * 5; i <= range * 5; i++) {
            const isMajor = i % 5 === 0;
            if (isMajor !== (type === 'major') || i === 0) continue;
            addLine(floor, 1, i / 5, type);
            addLine(floor, -1, i / 5, type);
        }
    }
    addLine(floor, 1, 0, 'axis-red');
    addLine(floor, -1, 0, 'axis-blue');
}

// タイムラインのフィーチャ
const features = [
    'sketch', 'extrude', 'extrude', 'fillet', 'fillet', 'extrude', 'move', 'sketch',
    'extrude', 'extrude', 'loft', 'extrude', 'extrude', 'loft', 'extrude', 'pipe',
    'offset', 'offset', 'pipe', 'offset', 'offset', 'sketch', 'sketch', 'sketch',
    'sketch', 'sketch', 'pipe', 'offset', 'sketch', 'sketch', 'pipe', 'offset',
    'offset', 'offset', 'plane', 'split', 'extrude', 'extrude', 'extrude', 'sketch',
    'extrude', 'extrude', 'plane', 'plane', 'split', 'snap', 'shell', 'extrude',
    'extrude', 'sketch', 'extrude', 'extrude', 'sketch', 'extrude', 'extrude', 'link',
    'loft', 'loft', 'fillet', 'fillet', 'sketch', 'extrude'
];
const currentFeature = 2;

function drawTimeline() {
    const timeline = document.getElementById('timeline');
    features.forEach((name, index) => {
        const item = document.createElement('li');
        if (index > currentFeature) item.className = 'suppressed';
        if (index === currentFeature) item.className = 'marker';
        item.innerHTML = `<button aria-label="${name}"><svg><use href="#i-${name}"/></svg></button>`;
        timeline.appendChild(item);
    });
}

drawFloor();
drawTimeline();
```
